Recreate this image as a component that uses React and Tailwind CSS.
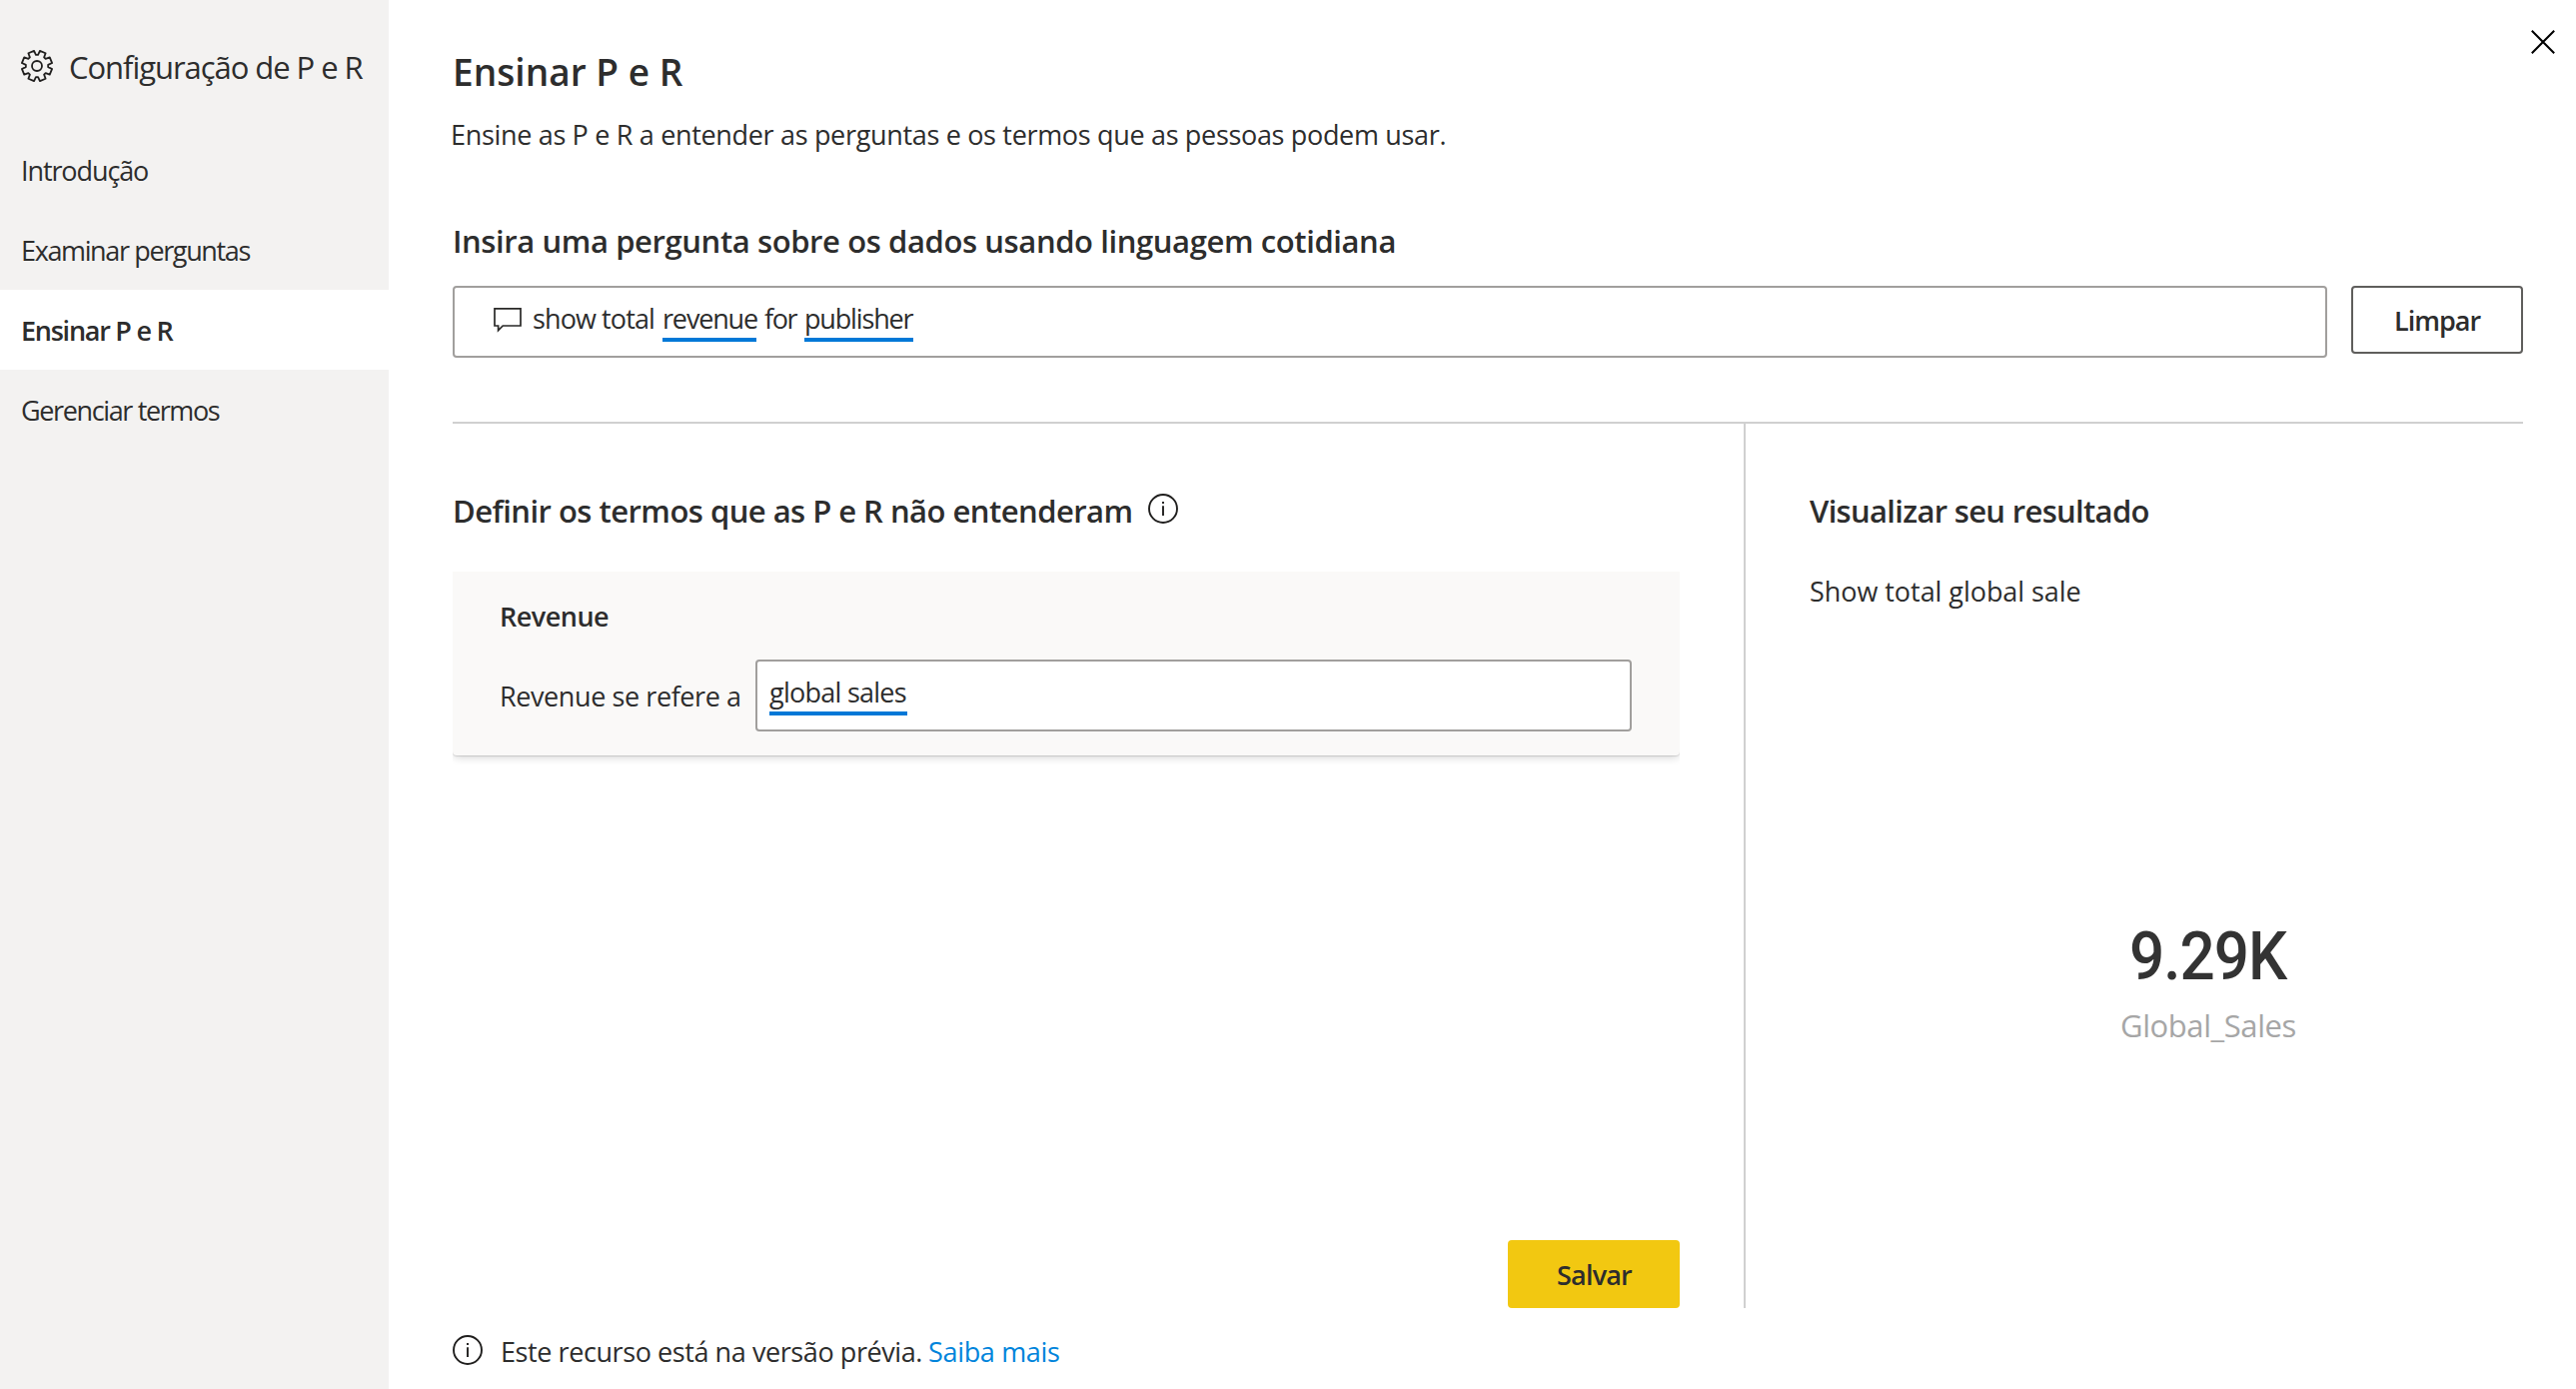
import React from "react";

const NAV = [
  { label: "Introdução", spacing: "tracking-[-1.1px]" },
  { label: "Examinar perguntas", spacing: "tracking-[-1.37px]" },
  { label: "Ensinar P e R", spacing: "tracking-[-1.25px]", active: true },
  { label: "Gerenciar termos", spacing: "tracking-[-1.37px]" },
];

// Eight-toothed outline, teeth offset half a step from the vertical.
const gearPoints = Array.from({ length: 8 }, (_, i) => {
  const mid = i * 45 + 22.5;
  return [
    [mid - 17, 11.2],
    [mid - 11.5, 11.6],
    [mid - 11.5, 15.4],
    [mid + 11.5, 15.4],
    [mid + 11.5, 11.6],
    [mid + 17, 11.2],
  ]
    .filter((_, k) => k !== 1 && k !== 4)
    .map(([deg, r]) => {
      const a = (deg * Math.PI) / 180;
      return `${(16 + r * Math.sin(a)).toFixed(2)},${(16 - r * Math.cos(a)).toFixed(2)}`;
    })
    .join(" ");
}).join(" ");

function GearIcon() {
  return (
    <svg className="h-8 w-8 shrink-0" viewBox="0 0 32 32" fill="none" stroke="#201f1e" strokeWidth="1.8" strokeLinejoin="round">
      <polygon points={gearPoints} />
      <circle cx="16" cy="16" r="5" />
    </svg>
  );
}

function InfoIcon() {
  return (
    <svg className="h-[30px] w-[30px] shrink-0" viewBox="0 0 30 30" fill="none" stroke="#201f1e">
      <circle cx="15" cy="15" r="14" strokeWidth="1.9" />
      <path d="M15 8v2M15 12.2v9.8" strokeWidth="1.9" />
    </svg>
  );
}

function BubbleIcon() {
  return (
    <svg className="h-[26px] w-7 shrink-0" viewBox="0 0 28 26" fill="none" stroke="#292827" strokeWidth="1.7">
      <path d="M1 1.8H27V19H9.2L4.6 23.6V19H1Z" />
    </svg>
  );
}

function Term({ children, className }) {
  return (
    <span className={`block h-[42px] border-b-4 border-[#0078d7] whitespace-nowrap ${className}`}>{children}</span>
  );
}

export default function App() {
  return (
    <div className="relative flex h-[1390px] w-[2578px] overflow-hidden bg-white font-['Open_Sans','Noto_Sans',sans-serif] text-[27px] leading-[37px] text-[#2d2d2d]">
      <aside className="flex w-[389px] shrink-0 flex-col bg-[#f3f2f1]">
        <div className="flex h-[130px] items-start pt-[46px] pl-[21px]">
          <div className="mt-1"><GearIcon /></div>
          <h2 className="ml-4 text-[31px] leading-[42px] tracking-[-1.05px] whitespace-nowrap">Configuração de P e R</h2>
        </div>
        <nav className="flex flex-col">
          {NAV.map((n) => (
            <a
              key={n.label}
              className={`h-20 pt-[22px] pl-[21px] whitespace-nowrap ${n.spacing} ${n.active ? "bg-white font-semibold" : ""}`}
            >
              {n.label}
            </a>
          ))}
        </nav>
      </aside>

      <main className="flex w-[2136px] shrink-0 flex-col pt-[46px] pl-16">
        <h1 className="text-[37px] leading-[51px] font-semibold tracking-[0.04px]">Ensinar P e R</h1>
        <p className="mt-[19px] -ml-0.5 tracking-[-0.325px] whitespace-nowrap">
          Ensine as P e R a entender as perguntas e os termos que as pessoas podem usar.
        </p>
        <h3 className="mt-[67px] text-[31px] leading-[42px] font-semibold tracking-[-0.4px] whitespace-nowrap">
          Insira uma pergunta sobre os dados usando linguagem cotidiana
        </h3>

        <div className="mt-6 flex items-start justify-between">
          <div className="flex h-[72px] w-[1876px] items-start rounded border-2 border-[#a19f9d] pt-3 pl-[39px]">
            <div className="mt-[7px] mr-[11px]"><BubbleIcon /></div>
            <span className="w-[130px] tracking-[-0.9px] whitespace-nowrap">show total</span>
            <Term className="w-[94px] tracking-[-1.16px]">revenue</Term>
            <span className="ml-2 w-10 tracking-[-1.4px] whitespace-nowrap">for</span>
            <Term className="w-[109px] tracking-[-1.16px]">publisher</Term>
          </div>
          <button className="flex h-[68px] w-[172px] items-start justify-center rounded border-2 border-[#5f5e5c] pt-3.5 font-semibold tracking-[-1px]">
            Limpar
          </button>
        </div>

        <div className="mt-16 flex h-[887px] border-t-2 border-[#d0d0d0]">
          <section className="flex w-[1292px] shrink-0 flex-col pt-[66px] pr-16">
            <div className="flex items-start">
              <h3 className="w-[696px] text-[31px] leading-[42px] font-semibold tracking-[-0.53px] whitespace-nowrap">
                Definir os termos que as P e R não entenderam
              </h3>
              <div className="mt-1"><InfoIcon /></div>
            </div>

            <div className="mt-10 h-[184px] rounded-b bg-[#faf9f8] pt-[26px] pl-[47px] shadow-[0_3px_8px_-1px_rgba(0,0,0,0.17),0_1px_1px_rgba(0,0,0,0.12)] [clip-path:inset(0_0_-20px_0)]">
              <div className="font-semibold tracking-[-0.51px]">Revenue</div>
              <div className="mt-[25px] flex items-start">
                <span className="mt-[18px] w-64 shrink-0 tracking-[-0.41px] whitespace-nowrap">Revenue se refere a</span>
                <div className="flex h-[72px] w-[877px] items-start rounded border-2 border-[#a19f9d] bg-white pt-3 pl-3">
                  <Term className="w-[138px] tracking-[-0.74px]">global sales</Term>
                </div>
              </div>
            </div>

            <button className="mt-auto flex h-[68px] w-[172px] items-start justify-center self-end rounded bg-[#f2c811] pt-4 pl-px font-semibold tracking-[-0.82px]">
              Salvar
            </button>
          </section>

          <section className="flex grow flex-col border-l-2 border-[#d0d0d0] pt-[66px] pl-16">
            <h3 className="text-[31px] leading-[42px] font-semibold tracking-[-0.68px] whitespace-nowrap">Visualizar seu resultado</h3>
            <p className="mt-[41px] tracking-[-0.05px] whitespace-nowrap">Show total global sale</p>
            <div className="mt-[309px] ml-[311px] flex w-44 flex-col">
              <div className="ml-[9px] origin-left scale-x-[0.94] font-['Roboto',sans-serif] text-[66px] leading-[77px] font-medium tracking-[-1.1px] whitespace-nowrap text-[#333333]">
                9.29K
              </div>
              <div className="mt-[9px] text-[31px] leading-[42px] tracking-[-0.41px] whitespace-nowrap text-[#a6a6a6]">Global_Sales</div>
            </div>
          </section>
        </div>

        <footer className="mt-[25px] flex items-start whitespace-nowrap">
          <div className="mt-0.5"><InfoIcon /></div>
          <span className="ml-[18px] w-[428px] tracking-[-0.42px]">Este recurso está na versão prévia.</span>
          <a className="tracking-[-0.33px] text-[#0084db]">Saiba mais</a>
        </footer>
      </main>

      <button className="absolute top-[30px] right-[21px]" aria-label="Fechar">
        <svg className="h-6 w-6" viewBox="0 0 24 24" stroke="#000" strokeWidth="2" fill="none">
          <path d="M0.8 0.8L23.2 23.2M23.2 0.8L0.8 23.2" />
        </svg>
      </button>
    </div>
  );
}
